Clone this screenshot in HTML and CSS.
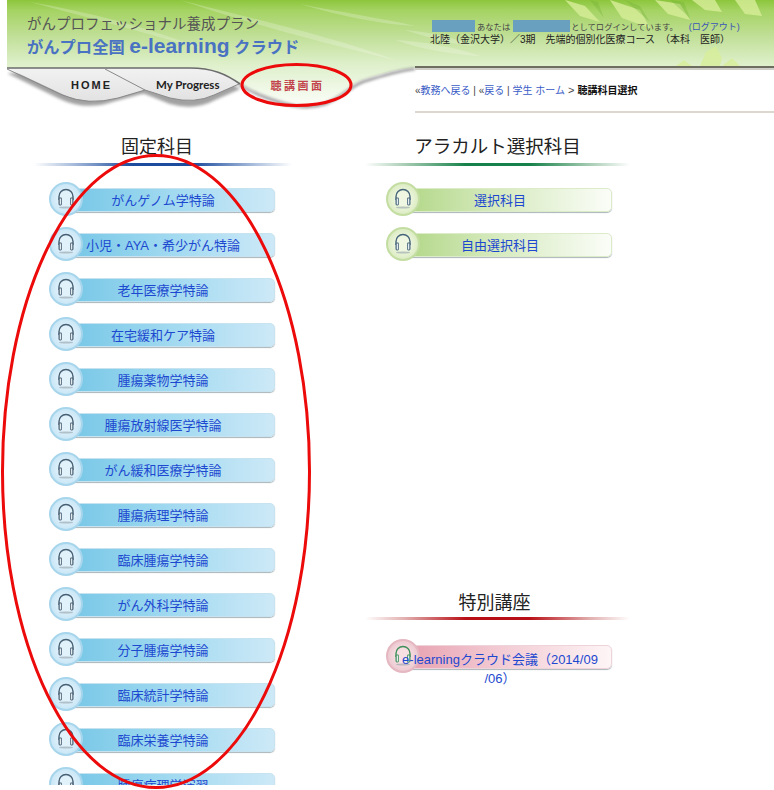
FILE: index.html
```html
<!DOCTYPE html>
<html lang="ja">
<head>
<meta charset="utf-8">
<title>がんプロ全国 e-learning クラウド</title>
<link rel="stylesheet" href="styles.css">
</head>
<body>
<svg class="defs" width="0" height="0" aria-hidden="true">
  <defs>
    <linearGradient id="sky" x1="0" y1="0" x2="0" y2="1">
      <stop offset="0" stop-color="#8cc63c"/>
      <stop offset="0.1" stop-color="#a5d363"/>
      <stop offset="0.34" stop-color="#c0df96"/>
      <stop offset="0.62" stop-color="#dff0cc"/>
      <stop offset="1" stop-color="#fbfdf8"/>
    </linearGradient>
    <linearGradient id="tabgrey" x1="0" y1="0" x2="0" y2="1">
      <stop offset="0" stop-color="#f2f2f2"/>
      <stop offset="1" stop-color="#e2e2e2"/>
    </linearGradient>
    <filter id="soft" x="-10%" y="-30%" width="120%" height="170%"><feGaussianBlur stdDeviation="1.4"/></filter>
    <symbol id="phones" viewBox="0 0 20 22">
      <path d="M3 13V9.500a7 7 0 0 1 14 0V13" fill="none" stroke="currentColor" stroke-width="1.400"/>
      <rect x="2.500" y="10.500" width="3.500" height="8" rx="1.400" fill="currentColor"/>
      <rect x="14" y="10.500" width="3.500" height="8" rx="1.400" fill="currentColor"/>
      <rect x="3.700" y="11.500" width="1.500" height="6" fill="#e4ebef"/>
      <rect x="14.800" y="11.500" width="1.500" height="6" fill="#e4ebef"/>
      <ellipse cx="10" cy="20.500" rx="7" ry="1" fill="#8d9aa3" opacity=".55"/>
    </symbol>
  </defs>
</svg>

<div class="page">
  <header class="top">
    <svg class="top-art" viewBox="7 0 767 112" preserveAspectRatio="none" aria-hidden="true">
      <path d="M7 0H774V68H415C400 68 385 73 365 79C350 84 345 94 325 102C305 108 290 104 270 97C255 92 248 88 238 82C225 74 210 68 190 68H7Z" fill="url(#sky)"/>
      <g fill="#fff" opacity=".22">
        <path d="M30 2C90 12 150 28 205 50C150 34 90 18 30 2Z"/>
        <path d="M180 0C250 18 330 36 395 60C320 42 250 24 180 0Z"/>
        <path d="M300 4C340 12 380 18 415 26C380 24 340 16 300 4Z"/>
        <path d="M395 40C425 42 450 46 480 56C450 54 425 50 395 40Z"/>
        <path d="M405 30C430 32 455 38 475 46C450 44 430 38 405 30Z"/>
      </g>
      <g fill="#d8ee9a" opacity=".8">
        <path d="M565 0L585 6L600 22L580 16Z"/>
        <path d="M610 0L640 10L650 28L622 18Z"/>
        <path d="M655 0L668 14L690 20L680 4Z"/>
        <path d="M692 0L705 10L722 12L715 0Z"/>
        <path d="M735 0L745 14L762 16L755 0Z"/>
        <path d="M700 66L706 52L716 46L722 58L720 66Z"/>
        <path d="M676 66L684 60L692 66Z"/>
        <path d="M722 66L732 58L740 66Z"/>
      </g>
      <g fill="#6fae33" opacity=".3">
        <path d="M625 0L650 22L640 6Z"/>
        <path d="M670 0L690 18L684 2Z"/>
        <path d="M590 0L604 18L598 2Z"/>
      </g>
      <path d="M7 70L60 96Q85 108 112 99L145 90L110 70Z" fill="#555" opacity=".55" filter="url(#soft)" transform="translate(0 3)"/>
      <path d="M110 70H190C212 70 225 76 240 86L215 97Q195 108 170 101L145 91Z" fill="#555" opacity=".55" filter="url(#soft)" transform="translate(0 3)"/>
      <path d="M238 84C248 90 255 94 270 99C290 106 305 110 325 104C345 96 350 86 365 81C385 75 400 70 415 69" fill="none" stroke="#777" stroke-width="2" filter="url(#soft)"/>
      <path d="M7 68H110L145 90L118 98Q88 106 62 94Z" fill="url(#tabgrey)"/>
      <path d="M105 68H190C210 68 225 74 239 84L214 95Q195 104 170 98L145 90Z" fill="url(#tabgrey)"/>
      <path d="M7 68H190C212 68 226 74 240 84" fill="none" stroke="#6b6b6b" stroke-width="1.600"/>
      <path d="M7 69L62 95Q88 106 118 98L145 90L105 69" fill="none" stroke="#8a8a8a" stroke-width="1"/>
      <path d="M145 90L170 98Q195 104 214 95L239 84" fill="none" stroke="#8a8a8a" stroke-width="1"/>
      <rect x="415" y="66" width="359" height="2" fill="#6d6d62"/>
      <rect x="415" y="68" width="359" height="2" fill="#cfcfc8"/>
    </svg>

    <div class="brand">
      <div class="brand-titles">
        <p class="brand-sub">がんプロフェッショナル養成プラン</p>
        <p class="brand-main">がんプロ全国 <span class="brand-latin">e-learning</span> クラウド</p>
      </div>
      <nav class="tabs">
        <a class="tab tab-home">HOME</a>
        <a class="tab tab-progress">My Progress</a>
        <a class="tab tab-current">聴講画面</a>
      </nav>
    </div>

    <div class="account">
      <p class="login"><span class="redact redact-a"></span><span class="login-t">あなたは</span><span class="redact redact-b"></span><span class="login-t">としてログインしています。</span><span class="logout">(<a>ログアウト</a>)</span></p>
      <p class="course">北陸（金沢大学）／3期　先端的個別化医療コース　（本科　医師）</p>
      <p class="crumbs"><span class="sep">«</span><a>教務へ戻る</a><span class="sep"> | «</span><a>戻る</a><span class="sep"> | </span><a>学生 ホーム</a><span class="gt"> &gt; </span><b>聴講科目選択</b></p>
    </div>
  </header>

  <main class="cols">
    <section class="col col-fixed">
      <h2 class="head head-fixed">固定科目</h2>
      <div class="rule rule-blue"></div>
      <ul class="list">
        <li class="btn blue"><span class="ico"><svg><use href="#phones"/></svg></span><a class="bar"><span>がんゲノム学特論</span></a></li>
        <li class="btn blue"><span class="ico"><svg><use href="#phones"/></svg></span><a class="bar"><span>小児・AYA・希少がん特論</span></a></li>
        <li class="btn blue"><span class="ico"><svg><use href="#phones"/></svg></span><a class="bar"><span>老年医療学特論</span></a></li>
        <li class="btn blue"><span class="ico"><svg><use href="#phones"/></svg></span><a class="bar"><span>在宅緩和ケア特論</span></a></li>
        <li class="btn blue"><span class="ico"><svg><use href="#phones"/></svg></span><a class="bar"><span>腫瘍薬物学特論</span></a></li>
        <li class="btn blue"><span class="ico"><svg><use href="#phones"/></svg></span><a class="bar"><span>腫瘍放射線医学特論</span></a></li>
        <li class="btn blue"><span class="ico"><svg><use href="#phones"/></svg></span><a class="bar"><span>がん緩和医療学特論</span></a></li>
        <li class="btn blue"><span class="ico"><svg><use href="#phones"/></svg></span><a class="bar"><span>腫瘍病理学特論</span></a></li>
        <li class="btn blue"><span class="ico"><svg><use href="#phones"/></svg></span><a class="bar"><span>臨床腫瘍学特論</span></a></li>
        <li class="btn blue"><span class="ico"><svg><use href="#phones"/></svg></span><a class="bar"><span>がん外科学特論</span></a></li>
        <li class="btn blue"><span class="ico"><svg><use href="#phones"/></svg></span><a class="bar"><span>分子腫瘍学特論</span></a></li>
        <li class="btn blue"><span class="ico"><svg><use href="#phones"/></svg></span><a class="bar"><span>臨床統計学特論</span></a></li>
        <li class="btn blue"><span class="ico"><svg><use href="#phones"/></svg></span><a class="bar"><span>臨床栄養学特論</span></a></li>
        <li class="btn blue"><span class="ico"><svg><use href="#phones"/></svg></span><a class="bar"><span>腫瘍病理学演習</span></a></li>
      </ul>
    </section>

    <section class="col col-side">
      <div class="block">
        <h2 class="head head-wide">アラカルト選択科目</h2>
        <div class="rule rule-green"></div>
        <ul class="list">
          <li class="btn green"><span class="ico"><svg><use href="#phones"/></svg></span><a class="bar"><span>選択科目</span></a></li>
          <li class="btn green"><span class="ico"><svg><use href="#phones"/></svg></span><a class="bar"><span>自由選択科目</span></a></li>
        </ul>
      </div>
      <div class="block block-special">
        <h2 class="head head-special">特別講座</h2>
        <div class="rule rule-red"></div>
        <ul class="list list-special">
          <li class="btn pink"><span class="ico"><svg><use href="#phones"/></svg></span><a class="bar"><span>e-learningクラウド会議（2014/09<br>/06）</span></a></li>
        </ul>
      </div>
    </section>
  </main>
</div>

<svg class="marks" viewBox="0 0 774 790" aria-hidden="true">
  <ellipse cx="296.500" cy="85" rx="54.500" ry="20.500" fill="none" stroke="#ec0a0a" stroke-width="3"/>
  <ellipse cx="156" cy="471.500" rx="153.500" ry="316" fill="none" stroke="#ec0a0a" stroke-width="3"/>
</svg>
</body>
</html>
```

FILE: styles.css
```css
* { box-sizing: border-box; }
html, body { margin: 0; padding: 0; }
body {
  position: relative;
  width: 774px;
  height: 790px;
  overflow: hidden;
  background: #fff;
  color: #222;
  font-family: "Liberation Sans", "Noto Sans CJK JP", sans-serif;
}
p, h2, ul { margin: 0; padding: 0; }
ul { list-style: none; }
.defs { position: absolute; }
.page { height: 785px; overflow: hidden; }

/* header */
.top {
  position: relative;
  display: flex;
  height: 112px;
  margin-left: 7px;
}
.top-art {
  position: absolute;
  inset: 0;
  width: 767px;
  height: 112px;
}
.brand { position: relative; width: 408px; flex: none; }
.brand-titles { height: 68px; padding: 14px 0 0 20px; }
.brand-sub { font-size: 14.500px; line-height: 20px; color: #555; white-space: nowrap; }
.brand-main { font-size: 16.300px; line-height: 22px; margin-top: 1px; font-weight: 700; color: #4a72c2; white-space: nowrap; }
.brand-latin { font-size: 21px; }
.tabs { display: flex; align-items: center; height: 33px; padding-left: 64px; column-gap: 44px; font-weight: 700; }
.tab { white-space: nowrap; color: #222; }
.tab-home { font-family: "Liberation Sans", sans-serif; font-size: 11px; letter-spacing: 2px; }
.tab-progress { font-family: Lato, sans-serif; font-size: 11.500px; }
.tab-current { font-size: 11px; letter-spacing: 2.500px; color: #c2444c; margin-left: 7px; }

.account { position: relative; flex: 1; padding: 20px 0 0 0; }
.login { display: flex; align-items: center; height: 12px; padding-left: 17px; font-size: 8.300px; color: #444; white-space: nowrap; }
.redact { flex: none; height: 12px; background: #6aa0bf; }
.redact-a { width: 43px; margin-right: 2px; }
.redact-b { width: 57px; margin: 0 1px 0 3px; }
.logout { margin-left: 11px; font-size: 9px; color: #3a55b5; }
.course { padding-left: 15px; margin-top: 1px; font-size: 10px; line-height: 13px; color: #222; white-space: nowrap; }
.crumbs {
  margin-top: 31px;
  height: 36px;
  padding-top: 5px;
  border-bottom: 2px solid #dcd8d0;
  font-size: 10px;
  line-height: 16px;
  color: #444;
  white-space: pre;
}
.crumbs a { color: #3a5cc6; }
.crumbs b { color: #111; }
.gt { font-size: 11px; }

/* columns */
.cols { display: flex; padding-left: 34px; column-gap: 73px; }
.col-fixed { width: 258px; flex: none; }
.col-side { width: 265px; flex: none; }
.head {
  height: 51px;
  padding-top: 22px;
  font-size: 18px;
  line-height: 26px;
  font-weight: 400;
  text-align: center;
  color: #222;
}
.head-fixed { padding-right: 12px; }
.head-wide { font-size: 18.500px; }
.head-special { padding: 24px 6px 0 0; }
.rule { height: 3px; margin-bottom: 16px; }
.rule-blue { background: linear-gradient(90deg, #fff, #a9bddc 15%, #1d4c9e 38%, #1d4c9e 62%, #a9bddc 85%, #fff); }
.rule-green { background: linear-gradient(90deg, #fff, #a8cdb4 15%, #16814a 38%, #16814a 62%, #a8cdb4 85%, #fff); }
.rule-red { background: linear-gradient(90deg, #fff, #e2b0b0 15%, #b80f16 38%, #b80f16 62%, #e2b0b0 85%, #fff); }

.list { display: flex; flex-direction: column; row-gap: 11px; padding-left: 15px; }
.col-side .list { padding-left: 21px; }
.list-special { margin-top: 19px; }
.block-special { margin-top: 305px; }

.btn { display: flex; align-items: flex-start; width: 226px; height: 34px; }
.ico {
  position: relative;
  z-index: 1;
  flex: none;
  width: 34px;
  height: 34px;
  padding: 4px 0 0 7px;
  border-radius: 50%;
  border: 2px solid;
}
.ico svg { display: block; width: 20px; height: 22px; margin-left: -2px; margin-top: -1px; }
.bar {
  flex: 1;
  min-width: 0;
  height: 24px;
  margin: 6px 0 0 -20px;
  padding: 2px 12px 0 0;
  border: 1px solid;
  border-radius: 5px;
  box-shadow: 0 1px 1px #a9b4ba;
  font-size: 13px;
  line-height: 19px;
  text-align: center;
  color: #1d49d0;
}
.bar span { position: relative; z-index: 2; display: block; white-space: nowrap; }

.blue .ico { border-color: #a6d5ec; background: radial-gradient(circle, #e2f2fb 30%, #b7def3); color: #465f72; }
.blue .bar { border-color: #c6e3ef; background: linear-gradient(90deg, #74c6e6, #a0d9f0 50%, #cde9f7); }
.green .ico { border-color: #c3dda2; background: radial-gradient(circle, #eff7e2 30%, #cfe5ae); color: #46657a; }
.green .bar { border-color: #dcebc8; background: linear-gradient(90deg, #afd684, #d2e8b8 40%, #fbfdf8); }
.pink .ico { border-color: #e5b7c1; background: radial-gradient(circle, #f6e0e4 30%, #e7b9c3); color: #3f8f5a; }
.pink .bar { padding-top: 4px; border-color: #eed3da; background: linear-gradient(90deg, #e79fae, #f2c9d2 45%, #fdf5f6); }

.marks { position: absolute; left: 0; top: 0; width: 774px; height: 790px; z-index: 5; pointer-events: none; }
```
